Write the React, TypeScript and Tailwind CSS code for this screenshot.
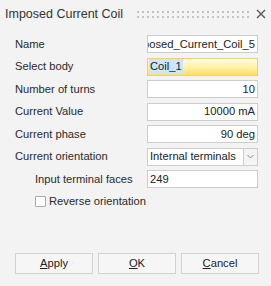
import React from "react";

const font = { fontFamily: '"Liberation Sans", Arial, sans-serif' };

function Field({ children, className = "" }: { children?: React.ReactNode; className?: string }) {
  return (
    <div
      className={`flex h-[18px] w-[111px] items-center overflow-hidden whitespace-nowrap border border-[#cdcdcd] bg-white px-[2px] text-[11.2px] text-[#222] ${className}`}
    >
      {children}
    </div>
  );
}

function Row({ label, indent, children }: { label: string; indent?: boolean; children: React.ReactNode }) {
  return (
    <div className="flex h-[18px] items-center">
      <span className={`flex-1 text-[11.2px] text-[#2a2a2a] ${indent ? "pl-[20px]" : ""}`}>{label}</span>
      {children}
    </div>
  );
}

export default function App() {
  const dots = Array.from({ length: 23 });

  return (
    <div className="h-[286px] w-[271px] bg-[#f3f3f3]" style={font}>
      {/* title bar */}
      <div className="flex h-[28px] items-center pl-[5px] pr-[4px]">
        <span className="text-[12.5px] text-[#333]">Imposed Current Coil</span>
        <div className="ml-[14px] flex flex-col gap-[3px]">
          {[0, 1].map((r) => (
            <div key={r} className="flex gap-[3px]">
              {dots.map((_, i) => (
                <span key={i} className="h-[2px] w-[2px] bg-[#c4c4c4]" />
              ))}
            </div>
          ))}
        </div>
        <svg className="ml-auto mr-[1px]" width="10" height="10" viewBox="0 0 10 10">
          <path d="M1 1L9 9M9 1L1 9" stroke="#555" strokeWidth="1.3" />
        </svg>
      </div>

      {/* form */}
      <div className="mt-[7px] flex flex-col gap-[4.5px] pl-[15px] pr-[13px]">
        <Row label="Name">
          <Field className="justify-end">Imposed_Current_Coil_5</Field>
        </Row>
        <Row label="Select body">
          <div className="flex h-[18px] w-[111px] items-center border border-[#e8d27a] bg-gradient-to-b from-[#fffbe6] via-[#fff2a8] to-[#ffdf5c] px-[1px] text-[11.2px] text-[#222]">
            <span className="bg-[#cce6fb] px-[1px] leading-[15px]">Coil_1</span>
          </div>
        </Row>
        <Row label="Number of turns">
          <Field className="justify-end">10</Field>
        </Row>
        <Row label="Current Value">
          <Field className="justify-end">10000 mA</Field>
        </Row>
        <Row label="Current phase">
          <Field className="justify-end">90 deg</Field>
        </Row>
        <Row label="Current orientation">
          <div className="flex h-[18px] w-[111px] border border-[#cdcdcd] bg-white text-[11.2px] text-[#222]">
            <span className="flex flex-1 items-center px-[2px]">Internal terminals</span>
            <span className="flex w-[14px] items-center justify-center border-l border-[#cdcdcd] bg-[#f4f4f4]">
              <svg width="7" height="5" viewBox="0 0 7 5">
                <path d="M0.5 1L3.5 4L6.5 1" fill="none" stroke="#888" strokeWidth="1" />
              </svg>
            </span>
          </div>
        </Row>
        <Row label="Input terminal faces" indent>
          <Field>249</Field>
        </Row>
        <div className="flex h-[18px] items-center pl-[20px]">
          <span className="h-[11px] w-[11px] rounded-[1px] border border-[#a9a9a9] bg-white" />
          <span className="ml-[3px] text-[11.2px] text-[#2a2a2a]">Reverse orientation</span>
        </div>
      </div>

      {/* buttons */}
      <div className="mt-[42.5px] flex gap-[5px] pl-[15px]">
        {[
          ["A", "pply"],
          ["O", "K"],
          ["C", "ancel"],
        ].map(([k, rest]) => (
          <button
            key={k}
            className="flex h-[21px] w-[78px] items-center justify-center border border-[#d2d2d2] bg-[#f6f6f6] text-[11.2px] text-[#222]"
          >
            <span className="underline underline-offset-[1px]">{k}</span>
            {rest}
          </button>
        ))}
      </div>
    </div>
  );
}
